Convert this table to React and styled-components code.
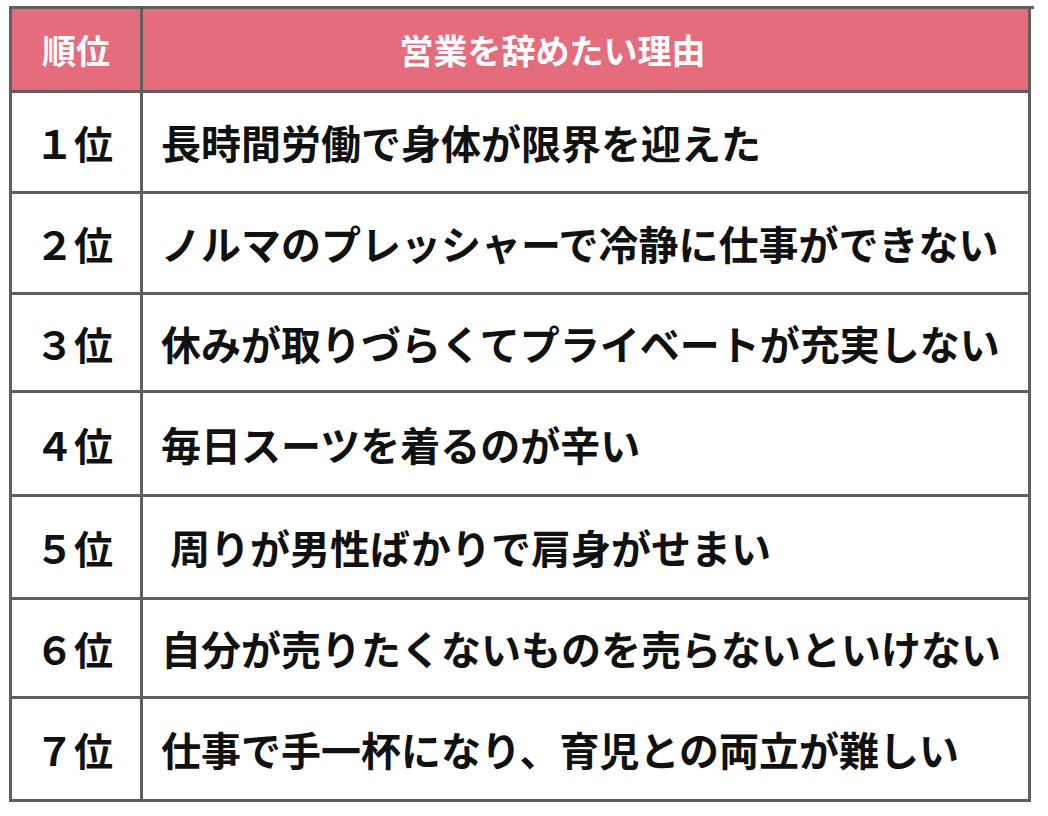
import React from "react";
import styled, { createGlobalStyle } from "styled-components";

const GlobalStyle = createGlobalStyle`
  html, body {
    margin: 0;
    padding: 0;
    background: #ffffff;
  }
  body {
    font-family: "Noto Sans CJK JP", "Noto Sans", sans-serif;
  }
`;

const Page = styled.div`
  padding: 6px 0 0 9px;
`;

const Table = styled.div`
  width: 1022px;
  display: grid;
  grid-template-columns: 131px 888px;
  border-top: 3px solid #5e5e5e;
  border-left: 3px solid #5e5e5e;
`;

const Cell = styled.div`
  box-sizing: border-box;
  height: ${(props) => props.$h}px;
  border-right: 3px solid #5e5e5e;
  border-bottom: 3px solid #5e5e5e;
  display: flex;
  align-items: center;
`;

const HeadCell = styled(Cell)`
  background: #e56c7d;
  color: #ffffff;
  font-size: 34px;
  font-weight: 700;
  justify-content: center;
  padding-right: ${(props) => props.$pr || 0}px;
`;

const RankCell = styled(Cell)`
  justify-content: center;
  color: #111111;
  font-size: 39px;
  font-weight: 700;
  padding-right: 4px;
`;

const ReasonCell = styled(Cell)`
  padding-left: 18px;
  color: #111111;
  font-size: 40px;
  font-weight: 700;
  white-space: pre;
`;

const rows = [
  { rank: "１位", reason: "長時間労働で身体が限界を迎えた", h: 101 },
  { rank: "２位", reason: "ノルマのプレッシャーで冷静に仕事ができない", h: 101 },
  { rank: "３位", reason: "休みが取りづらくてプライベートが充実しない", h: 98 },
  { rank: "４位", reason: "毎日スーツを着るのが辛い", h: 104 },
  { rank: "５位", reason: " 周りが男性ばかりで肩身がせまい", h: 103 },
  { rank: "６位", reason: "自分が売りたくないものを売らないといけない", h: 99 },
  { rank: "７位", reason: "仕事で手一杯になり、育児との両立が難しい", h: 103 },
];

export default function App() {
  return (
    <>
      <GlobalStyle />
      <Page>
        <Table>
          <HeadCell $h={84}>順位</HeadCell>
          <HeadCell $h={84} $pr={66}>
            営業を辞めたい理由
          </HeadCell>
          {rows.map((row) => (
            <React.Fragment key={row.rank}>
              <RankCell $h={row.h}>{row.rank}</RankCell>
              <ReasonCell $h={row.h}>{row.reason}</ReasonCell>
            </React.Fragment>
          ))}
        </Table>
      </Page>
    </>
  );
}
